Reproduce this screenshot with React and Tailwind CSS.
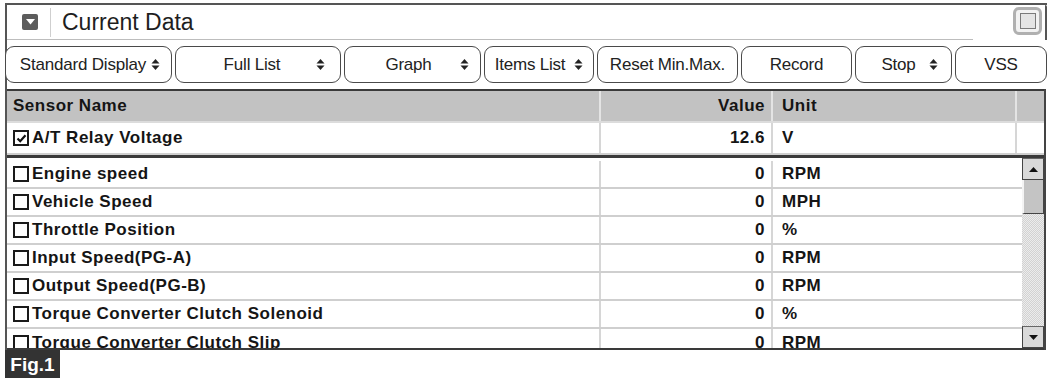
import React from "react";

const Spin = () => (
  <svg width="9" height="13" viewBox="0 0 9 13" className="shrink-0">
    <path d="M0.5 5.5 L4.5 1 L8.5 5.5 Z" fill="#222" />
    <path d="M0.5 7.5 L8.5 7.5 L4.5 12 Z" fill="#222" />
  </svg>
);

const Btn = ({ label, w, spin, pl = "pl-3", pr = "pr-3" }) => (
  <div
    className={`h-[37px] flex items-center ${pl} ${pr} border-[1.5px] border-[#4a4a4a] rounded-[9px] bg-white shrink-0`}
    style={{ width: w }}
  >
    <span className="flex-1 text-center text-[17px] text-[#222] whitespace-nowrap tracking-[-0.2px]">{label}</span>
    {spin && <Spin />}
  </div>
);

const Check = ({ checked }) => (
  <div className="w-[16px] h-[16px] border-2 border-[#1a1a1a] bg-white shrink-0 flex items-center justify-center">
    {checked && (
      <svg width="11" height="11" viewBox="0 0 11 11">
        <path d="M1.5 5.5 L4.2 8.2 L9.5 2.2" stroke="#111" strokeWidth="2.2" fill="none" />
      </svg>
    )}
  </div>
);

const rows = [
  ["Engine speed", "0", "RPM"],
  ["Vehicle Speed", "0", "MPH"],
  ["Throttle Position", "0", "%"],
  ["Input Speed(PG-A)", "0", "RPM"],
  ["Output Speed(PG-B)", "0", "RPM"],
  ["Torque Converter Clutch Solenoid", "0", "%"],
  ["Torque Converter Clutch Slip", "0", "RPM"],
];

const txt = "text-[17px] font-bold text-[#151515] tracking-[0.5px] whitespace-nowrap";

const Row = ({ name, value, unit, checked, last }) => (
  <div className={`grid grid-cols-[594px_172px_1fr] h-[28px] shrink-0 ${last ? "" : "border-b-2 border-[#cfcfcf]"}`}>
    <div className="flex items-center gap-[3px] pl-[6px] border-r-2 border-[#d6d6d6]">
      <Check checked={checked} />
      <span className={txt}>{name}</span>
    </div>
    <div className={`flex items-center justify-end pr-[6px] border-r-2 border-[#d6d6d6] ${txt}`}>{value}</div>
    <div className={`flex items-center pl-[9px] ${txt}`}>{unit}</div>
  </div>
);

const ScrollBtn = ({ up }) => (
  <div className="h-[22px] w-full bg-[#d9d9d9] border-[1.5px] border-[#444] border-t-[#666] flex items-center justify-center shrink-0">
    <svg width="9" height="5" viewBox="0 0 9 5">
      {up ? <path d="M0 5 L4.5 0 L9 5 Z" fill="#111" /> : <path d="M0 0 L9 0 L4.5 5 Z" fill="#111" />}
    </svg>
  </div>
);

export default function App() {
  return (
    <div className="w-[1050px] h-[382px] bg-white pt-[3px] pl-[5px] overflow-hidden" style={{ fontFamily: '"Liberation Sans", Arial, sans-serif' }}>
      <div className="w-[1042px] border-l-2 border-t-2 border-[#555]">
        {/* Title row */}
        <div className="flex items-start h-[35px] border-r-2 border-[#555] rounded-tr-[2px]">
          <div className="w-[966px] h-[35px] flex items-center border-b border-[#bdbdbd]">
            <div className="ml-[15px] w-[16px] h-[16px] rounded-[2px] bg-[#5c5c5c] flex items-center justify-center">
              <svg width="9" height="6" viewBox="0 0 9 6">
                <path d="M0 0 L9 0 L4.5 5.5 Z" fill="#fff" />
              </svg>
            </div>
            <div className="ml-[12px] w-px h-[29px] bg-[#cfcfcf]" />
            <span className="ml-[11px] text-[23px] text-[#1e1e1e] leading-none">Current Data</span>
          </div>
          <div className="ml-auto mr-[3px] mt-[2px] w-[29px] h-[28px] rounded-[6px] border-[3px] border-[#b0b0b0] bg-[#f2f2f2] flex items-center justify-center">
            <div className="w-[16px] h-[16px] border border-[#7a7a7a] bg-[#e4e4e4]" />
          </div>
        </div>

        {/* Button row */}
        <div className="flex gap-[3px] mt-[6px] -ml-[2px]">
          <Btn label="Standard Display" w={167} spin pl="pl-[9px]" pr="pr-[11px]" />
          <Btn label="Full List" w={166} spin pr="pr-[15px]" />
          <Btn label="Graph" w={137} spin pr="pr-[11px]" />
          <Btn label="Items List" w={110} spin pl="pl-[1px]" pr="pr-[10px]" />
          <Btn label="Reset Min.Max." w={141} pl="pl-[1px]" pr="pr-[1px]" />
          <Btn label="Record" w={111} />
          <Btn label="Stop" w={97} spin pr="pr-[13px]" />
          <Btn label="VSS" w={92} />
        </div>

        {/* Table */}
        <div className="mt-[6px] w-[1039px] border-r-2 border-[#444]">
          <div className="border-t-2 border-[#3a3a3a]">
            {/* Header */}
            <div className="grid grid-cols-[594px_172px_244px_1fr] h-[32px] bg-[#c2c2c2] border-b-2 border-[#dcdcdc]">
              <div className={`flex items-center pl-[6px] border-r-2 border-[#e4e4e4] ${txt}`}>Sensor Name</div>
              <div className={`flex items-center justify-end pr-[6px] border-r-2 border-[#e4e4e4] ${txt}`}>Value</div>
              <div className={`flex items-center pl-[9px] border-r-2 border-[#e4e4e4] ${txt}`}>Unit</div>
              <div />
            </div>
            {/* A/T row */}
            <div className="grid grid-cols-[594px_172px_244px_1fr] h-[32px] border-b-2 border-[#cfcfcf]">
              <div className="flex items-center gap-[3px] pl-[6px] border-r-2 border-[#d6d6d6]">
                <Check checked />
                <span className={txt}>A/T Relay Voltage</span>
              </div>
              <div className={`flex items-center justify-end pr-[6px] border-r-2 border-[#d6d6d6] ${txt}`}>12.6</div>
              <div className={`flex items-center pl-[9px] border-r-2 border-[#d6d6d6] ${txt}`}>V</div>
              <div />
            </div>
          </div>
          {/* List */}
          <div className="flex h-[195px] border-t-[3px] border-b-2 border-[#3a3a3a] overflow-hidden">
            <div className="flex-1 flex flex-col pt-[3px] overflow-hidden">
              {rows.map((r, i) => (
                <Row key={r[0]} name={r[0]} value={r[1]} unit={r[2]} last={i === rows.length - 1} />
              ))}
            </div>
            <div className="w-[22px] flex flex-col bg-[#e6e6e6] bg-[repeating-conic-gradient(#d2d2d2_0_25%,#ececec_0_50%)] bg-[length:2px_2px]">
              <ScrollBtn up />
              <div className="h-[34px] bg-[#c4c4c4] border-l-2 border-l-[#f4f4f4] border-r-[1.5px] border-b-[1.5px] border-[#444] shrink-0" />
              <div className="flex-1" />
              <ScrollBtn />
            </div>
          </div>
        </div>
      </div>
      {/* Fig label */}
      <div className="w-[55px] h-[28px] bg-[#333] flex items-center justify-center">
        <span className="text-white text-[19px] font-bold leading-none">Fig.1</span>
      </div>
    </div>
  );
}
